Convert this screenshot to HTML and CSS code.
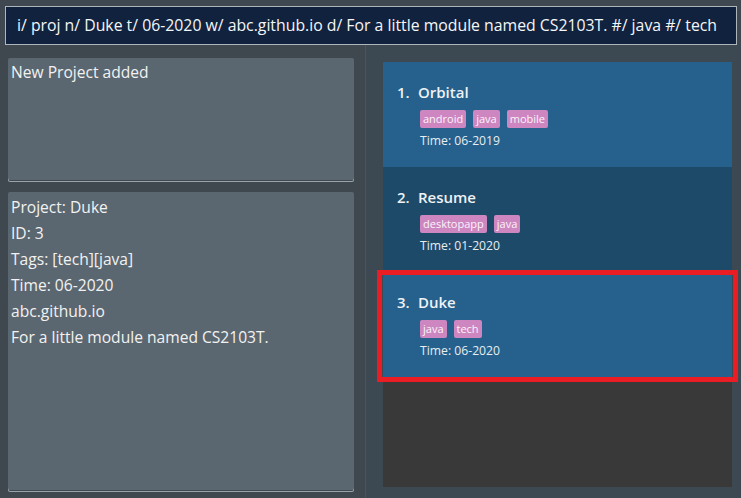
FILE: index.html
```html
<!DOCTYPE html>
<html>
<head>
<meta charset="utf-8">
<link rel="stylesheet" href="styles.css">
</head>
<body>
<div class="app">
  <div class="cmd-wrap">
    <div class="cmd">i/ proj n/ Duke t/ 06-2020 w/ abc.github.io d/ For a little module named CS2103T. #/ java #/ tech</div>
  </div>
  <div class="main">
    <div class="left">
      <div class="panel result">
        <div class="result-text">New Project added</div>
      </div>
      <div class="panel detail">
        <div class="line">Project: Duke</div>
        <div class="line">ID: 3</div>
        <div class="line">Tags: [tech][java]</div>
        <div class="line">Time: 06-2020</div>
        <div class="line">abc.github.io</div>
        <div class="line">For a little module named CS2103T.</div>
      </div>
    </div>
    <div class="right">
      <div class="list">
        <div class="card">
          <div class="title"><span class="num">1.</span><span class="name">Orbital</span></div>
          <div class="tags"><span class="tag">android</span><span class="tag">java</span><span class="tag">mobile</span></div>
          <div class="time">Time: 06-2019</div>
        </div>
        <div class="card odd">
          <div class="title"><span class="num">2.</span><span class="name">Resume</span></div>
          <div class="tags"><span class="tag">desktopapp</span><span class="tag">java</span></div>
          <div class="time">Time: 01-2020</div>
        </div>
        <div class="card selected">
          <div class="title"><span class="num">3.</span><span class="name">Duke</span></div>
          <div class="tags"><span class="tag">java</span><span class="tag">tech</span></div>
          <div class="time">Time: 06-2020</div>
          <div class="highlight"></div>
        </div>
      </div>
    </div>
  </div>
</div>
</body>
</html>
```

FILE: styles.css
```css
* { box-sizing: border-box; }
html, body { margin: 0; padding: 0; }
body {
  width: 741px;
  height: 498px;
  overflow: hidden;
  background: #3f484f;
  font-family: "Open Sans", "Noto Sans", sans-serif;
  color: #f2f2f2;
}
.app { display: flex; flex-direction: column; height: 498px; }
.cmd-wrap { padding: 6px 4px 0 5px; background: #3f4850; }
.cmd {
  height: 39px;
  border: 1px solid #aeb5bb;
  background: #11223f;
  color: #f4f6f8;
  font-size: 15.8px;
  line-height: 37px;
  padding-left: 11px;
  white-space: nowrap;
  overflow: hidden;
}
.main { flex: 1; display: flex; }
.left {
  width: 365px;
  padding: 13px 11px 8px 8px;
  display: flex;
  flex-direction: column;
  gap: 12px;
  background: #3f484f;
}
.panel {
  background: #5b6770;
  border-radius: 2px;
  box-shadow: 0 2px 0 -1px #3f484f, 0 2px 0 0 #9aa3aa;
}
.result { height: 122px; padding: 3px 3px; }
.result-text { font-size: 15.6px; line-height: 22px; }
.detail { flex: 1; padding: 2px 3px; }
.line { font-size: 15.6px; line-height: 26px; }
.right {
  flex: 1;
  border-left: 1px solid #4a545b;
  background: #3c4852;
  padding: 17px 9px 11px 17px;
  display: flex;
}
.list {
  flex: 1;
  background: #393939;
  display: flex;
  flex-direction: column;
}
.card {
  position: relative;
  height: 105px;
  background: #25618c;
  padding: 20px 0 0 14px;
}
.card.odd { background: #1e4a69; }
.title { display: flex; font-weight: 600; font-size: 15px; line-height: 20px; color: #eef2f5; }
.num { width: 21px; }
.tags { display: flex; gap: 7px; margin: 8px 0 0 23px; }
.tag {
  background: #cd86c0;
  color: #fbf3fa;
  font-size: 11px;
  line-height: 18px;
  height: 18px;
  padding: 0 3px;
  border-radius: 2px;
}
.time { margin: 3px 0 0 23px; font-size: 12.2px; line-height: 20px; color: #e8edf1; }
.highlight {
  position: absolute;
  left: -6px;
  right: -6px;
  top: -2px;
  bottom: -5px;
  border: 5px solid #ea1c24;
}
```
